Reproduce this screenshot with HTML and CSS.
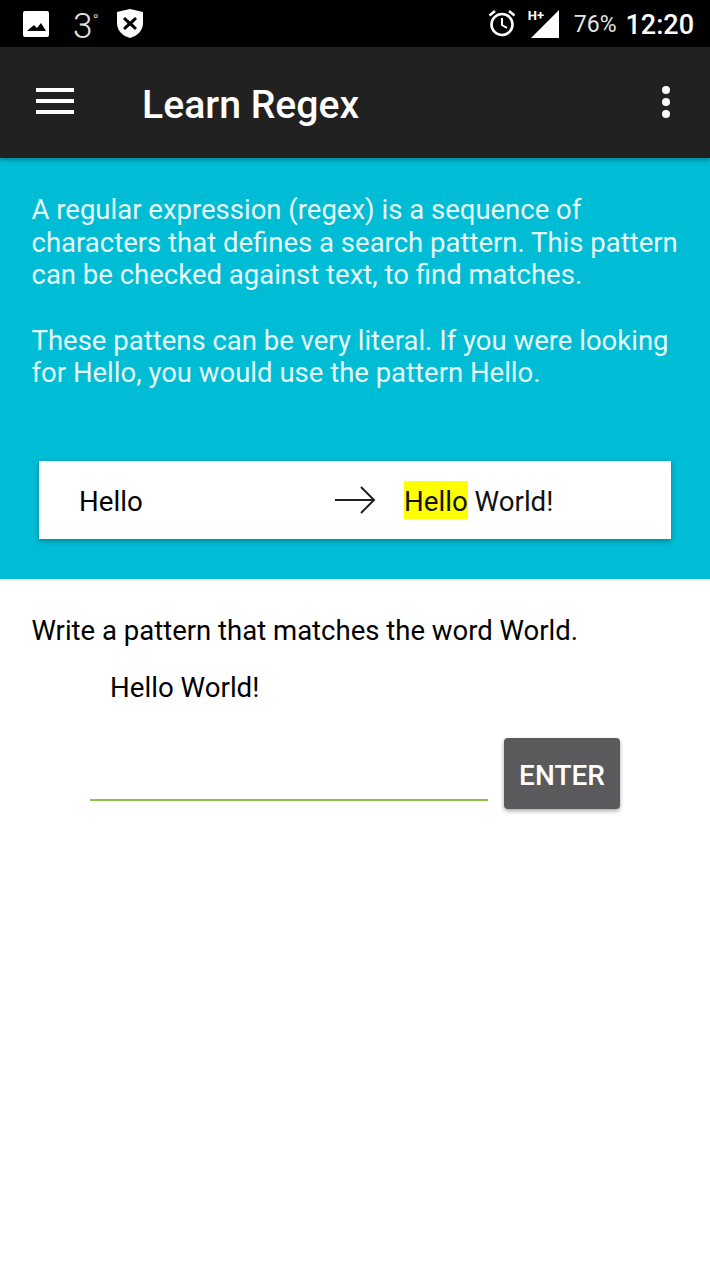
FILE: index.html
```html
<!DOCTYPE html>
<html lang="en">
<head>
<meta charset="utf-8">
<title>Learn Regex</title>
<link rel="stylesheet" href="styles.css">
</head>
<body>
<div class="status">
  <div class="status-left">
    <svg class="ic-image" width="26" height="26" viewBox="0 0 26 26"><path fill="#fff" fill-rule="evenodd" d="M2 0h22a2 2 0 0 1 2 2v22a2 2 0 0 1-2 2H2a2 2 0 0 1-2-2V2a2 2 0 0 1 2-2zM4 20h19l-5-8-4 5-3-3z"/></svg>
    <span class="temp">3<span class="deg">°</span></span>
    <svg class="ic-shield" width="26" height="29" viewBox="0 0 26 29"><path fill="#fff" fill-rule="evenodd" d="M13 0l13 3v11c0 8-6 13-13 15C6 27 0 22 0 14V3zM8 8l-2 2 4.500 4.500L6 19l2 2 5-4.500 5 4.500 2-2-4.500-4.500L20 10l-2-2-5 4.500z"/></svg>
  </div>
  <div class="status-right">
    <svg class="ic-alarm" width="28" height="28" viewBox="0 0 28 28"><g fill="none" stroke="#fff"><circle cx="14" cy="15.500" r="10.500" stroke-width="2.600"/><path d="M14 9v7l5 3" stroke-width="2"/><path d="M1.500 6.500L7 2M26.500 6.500L21 2" stroke-width="2.600"/></g></svg>
    <div class="signal">
      <span class="hplus">H+</span>
      <svg width="28" height="28" viewBox="0 0 28 28"><path fill="#fff" d="M28 0v28H0z"/></svg>
    </div>
    <span class="battery">76%</span>
    <span class="clock">12:20</span>
  </div>
</div>
<header class="toolbar">
  <div class="menu"><i></i><i></i><i></i></div>
  <h1 class="title">Learn Regex</h1>
  <div class="more"><i></i><i></i><i></i></div>
</header>
<section class="intro">
  <p class="intro-text">A regular expression (regex) is a sequence of<br>characters that defines a search pattern. This pattern<br>can be checked against text, to find matches.</p>
  <p class="intro-text">These pattens can be very literal. If you were looking<br>for Hello, you would use the pattern Hello.</p>
  <div class="card">
    <span class="card-pattern">Hello</span>
    <svg class="arrow" width="42" height="28" viewBox="0 0 42 28"><path fill="none" stroke="#212121" stroke-width="2" d="M1 14h39M27 1l13 13-13 13"/></svg>
    <span class="card-result"><mark>Hello</mark> World!</span>
  </div>
</section>
<main class="exercise">
  <p class="task">Write a pattern that matches the word World.</p>
  <p class="sample">Hello World!</p>
  <div class="answer">
    <div class="field"></div>
    <button class="enter" type="button">ENTER</button>
  </div>
</main>
</body>
</html>
```
FILE: styles.css
```css
* { box-sizing: border-box; }
html, body { margin: 0; padding: 0; }
body { width: 710px; height: 1262px; overflow: hidden; background: #fff; font-family: Roboto, sans-serif; color: #000; }

.status { height: 47px; background: #000; display: flex; justify-content: space-between; align-items: center; color: #fff; }
.status-left { display: flex; align-items: center; padding-left: 23px; }
.ic-image { display: block; }
.temp { font-size: 35px; font-weight: 300; color: #e4e4e4; margin-left: 24px; line-height: 47px; width: 44px; }
.deg { font-size: 17px; vertical-align: 12px; }
.ic-shield { display: block; }
.status-right { display: flex; align-items: center; padding-right: 16px; }
.ic-alarm { display: block; margin-bottom: 1px; }
.signal { display: flex; align-items: flex-end; justify-content: flex-end; width: 32px; height: 28px; margin: 0 15px 0 11px; position: relative; }
.hplus { font-size: 13px; font-weight: 700; line-height: 13px; position: absolute; left: 1px; top: -1px; background: #000; padding-right: 1px; }
.battery { font-size: 23px; line-height: 27px; color: #e4e4e4; margin: 2px 9px 0 0; }
.clock { font-size: 27px; line-height: 32px; font-weight: 500; margin-top: 2px; }

.toolbar { height: 111px; background: #212121; display: flex; align-items: center; padding: 0 40px 0 36px; color: #fff; position: relative; box-shadow: 0 2px 4px rgba(0,0,0,.3); }
.menu { width: 38px; display: flex; flex-direction: column; gap: 7px; margin-bottom: 4px; }
.menu i { display: block; height: 4px; background: #fff; }
.title { margin: 5px 0 0 68px; font-size: 39.200px; line-height: 48px; font-weight: 500; flex: 1; }
.more { display: flex; flex-direction: column; gap: 4px; width: 8px; margin-bottom: 2px; }
.more i { display: block; width: 8px; height: 8px; border-radius: 50%; background: #fff; }

.intro { height: 421px; background: #00bcd4; padding: 36px 0 0 31.500px; }
.intro-text { margin: 0 0 33px; font-size: 27.500px; line-height: 32.500px; color: #e6f8fa; font-weight: 400; white-space: nowrap; }
.card { margin: 71px 7.500px 0; width: 632px; height: 78px; background: #fff; display: flex; align-items: center; padding-left: 40px; font-size: 27.700px; box-shadow: 0 2px 5px rgba(0,0,0,.3); }
.card-pattern { width: 255px; margin-top: 3px; }
.arrow { display: block; }
.card-result { margin: 3px 0 0 28px; color: #111; }
mark { background: #ff0; color: inherit; padding: 4px 0 1px; }

.exercise { padding: 36px 32px 0 31.500px; }
.task { margin: 0; font-size: 27.500px; line-height: 32px; }
.sample { margin: 25px 0 0 78.500px; font-size: 27.700px; line-height: 32px; }
.answer { display: flex; margin: 34px 0 0 58.500px; }
.field { width: 398px; height: 63px; border-bottom: 2px solid #8bc34a; }
.enter { margin-left: 16px; width: 116px; height: 71px; border: 0; border-radius: 4px; background: #5a5a5c; color: #fff; font-family: Roboto, sans-serif; font-size: 28px; font-weight: 500; box-shadow: 0 2px 4px rgba(0,0,0,.35); padding: 4px 0 0; }
```
